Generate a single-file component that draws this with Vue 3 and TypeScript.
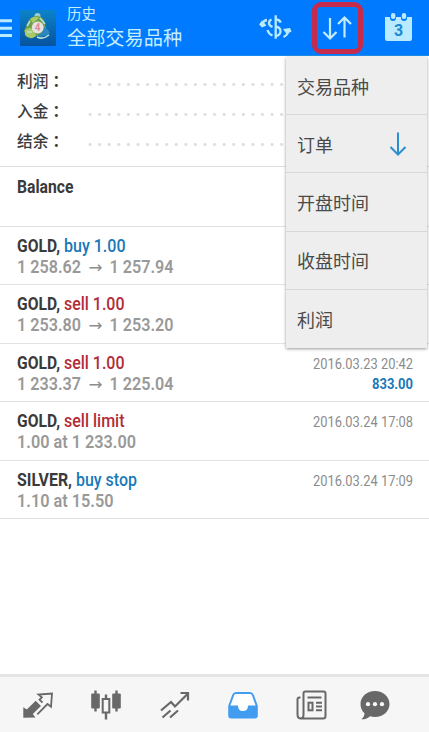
<script setup lang="ts">
interface Piece {
  text: string
  x: number
  width: number
  tone: string
}
interface Order {
  title: Piece[]
  detail: Piece[]
  date?: string
  profit?: string
}

const summary: string[] = ['利润', '入金', '结余']
const menu: string[] = ['交易品种', '订单', '开盘时间', '收盘时间', '利润']

const gold: Piece = { text: 'GOLD,', x: 17, width: 43, tone: 'name' }
const prices = (from: string, to: string): Piece[] => [
  { text: from, x: 17, width: 64, tone: 'muted' },
  { text: '→', x: 88.5, width: 14, tone: 'arrow' },
  { text: to, x: 109.5, width: 64, tone: 'muted' },
]

const orders: Order[] = [
  { title: [gold, { text: 'buy 1.00', x: 64, width: 61.5, tone: 'buy' }], detail: prices('1 258.62', '1 257.94') },
  { title: [gold, { text: 'sell 1.00', x: 64, width: 60.5, tone: 'sell' }], detail: prices('1 253.80', '1 253.20') },
  {
    title: [gold, { text: 'sell 1.00', x: 64, width: 60.5, tone: 'sell' }],
    detail: prices('1 233.37', '1 225.04'),
    date: '2016.03.23 20:42',
    profit: '833.00',
  },
  {
    title: [gold, { text: 'sell limit', x: 64, width: 60.5, tone: 'sell' }],
    detail: [{ text: '1.00 at 1 233.00', x: 17, width: 119, tone: 'muted' }],
    date: '2016.03.24 17:08',
  },
  {
    title: [
      { text: 'SILVER,', x: 17, width: 55, tone: 'name' },
      { text: 'buy stop', x: 76, width: 61, tone: 'buy' },
    ],
    detail: [{ text: '1.10 at 15.50', x: 17, width: 96.5, tone: 'muted' }],
    date: '2016.03.24 17:09',
  },
]
</script>

<template>
  <div class="screen">
    <header class="bar">
      <svg class="burger" width="13" height="20" viewBox="0 0 13 20">
        <path d="M0 2.8H12M0 10.2H12M0 17.6H12" />
      </svg>
      <svg class="logo" width="36" height="36" viewBox="0 0 36 36">
        <defs>
          <linearGradient id="tile" x1="0" y1="0" x2="0" y2="1">
            <stop offset="0" stop-color="#0b83c9" />
            <stop offset="1" stop-color="#07539f" />
          </linearGradient>
        </defs>
        <rect width="36" height="36" rx="1.5" fill="url(#tile)" />
        <circle cx="17.5" cy="6" r="3" fill="#9fcbd0" />
        <path d="M9 10q8-8 15 0l2 8-7 8-12 1-3-6z" fill="#709f4c" />
        <path d="M5 20q5-4 9 0l2 6q-6 5-11-1zM10 9q5-4 9-1l-6 5z" fill="#a9c968" />
        <path d="M24 17q7 3 5 8l-9 2-3-2q6-1 7-8z" fill="#2a86bd" />
        <path d="M17 27q6 3 12-2M20 8l5 6M7 16l3-5M7 22h5" fill="none" stroke="#b9ded4" stroke-width="1.6" />
        <circle cx="17.7" cy="17.5" r="5.9" fill="#e6e2e4" />
        <text x="17.7" y="21.2" text-anchor="middle" class="four">4</text>
      </svg>
      <div class="heading">
        <span class="small">历史</span>
        <span class="large">全部交易品种</span>
      </div>
      <svg class="currency" width="33" height="28" viewBox="0 0 33 28">
        <g fill="none" stroke="#b9eaff" stroke-width="2.3">
          <path d="M3 12Q4 7.5 8 7M29.5 17Q29 22 24.5 24" />
          <path d="M12.5 6.500q-2.500 1-2.500 3.700 0 2.500 3.500 3.700M8.500 17q1 4 5 5.500" />
          <path d="M16.700 2.300v23.400M16.700 6.500q4 0 5 3.200M16.700 13.500q4.800 1 4.800 4.700t-4.800 5" />
        </g>
        <path d="M0 11.500l3-4 4.500 5-4.500 2zM32.500 18.500l-1.500-3.500-7 1 3.500 5z" fill="#b9eaff" />
      </svg>
      <div class="sort">
        <svg width="30" height="26" viewBox="0 0 30 26">
          <path d="M8 3V23.500M1.500 17L8 23.500L14.500 17M22.500 22.500V2.500M16 9L22.500 2.500L29 9" />
        </svg>
      </div>
      <svg class="calendar" width="29" height="30" viewBox="0 0 29 30">
        <path d="M1 5h5v1q0 3 3 3t3-3V5h5v1q0 3 3 3t3-3V5h5v22q0 2-2 2H3q-2 0-2-2z" fill="#b9eaff" />
        <rect x="7" y="1" width="4.4" height="6" rx="2" fill="#b9eaff" />
        <rect x="17.8" y="1" width="4.4" height="6" rx="2" fill="#b9eaff" />
        <text x="14.5" y="24" text-anchor="middle" class="day">3</text>
      </svg>
    </header>

    <main class="content">
      <section class="summary">
        <div v-for="label in summary" :key="label" class="line">
          <span class="label">{{ label }}<span class="colon">：</span></span>
          <i class="dots"></i>
        </div>
      </section>
      <section class="balance">
        <svg width="429" height="58"><text x="17" y="26" textLength="56.5" lengthAdjust="spacingAndGlyphs" class="name">Balance</text></svg>
      </section>
      <section v-for="(order, index) in orders" :key="index" class="order">
        <svg width="429" height="57">
          <text v-for="p in order.title" :key="p.text" :x="p.x" y="24.9" :textLength="p.width" lengthAdjust="spacingAndGlyphs" :class="p.tone">{{ p.text }}</text>
          <text v-for="p in order.detail" :key="p.text" :x="p.x" y="45.6" :textLength="p.width" lengthAdjust="spacingAndGlyphs" :class="p.tone">{{ p.text }}</text>
          <text v-if="order.date" x="313" y="24.5" textLength="100" lengthAdjust="spacingAndGlyphs" class="date">{{ order.date }}</text>
          <text v-if="order.profit" x="372" y="45.4" textLength="41" lengthAdjust="spacingAndGlyphs" class="profit">{{ order.profit }}</text>
        </svg>
      </section>
    </main>

    <nav class="tabs">
      <svg width="32" height="32" viewBox="0 0 32 32">
        <path d="M1.3 28.7V18.2L4.8 20.5L13.7 11.7L19 17L10.8 25L13.5 28.4Z" fill="#686868" />
        <path d="M20.5 13.5L17.5 10.8L19.8 8.3L16.500 5.500L30 4.500L29 17.700L25.500 15L15.300 25.300" fill="none" stroke="#686868" stroke-width="1.800" />
      </svg>
      <svg width="32" height="32" viewBox="0 0 32 32">
        <path d="M5.5 1.500v21M26.500 1.500v21M16 5.500v25" stroke="#686868" stroke-width="2.400" />
        <rect x="1.200" y="4.500" width="8.600" height="15" rx="1" fill="#686868" />
        <rect x="22.200" y="4.500" width="8.600" height="15" rx="1" fill="#686868" />
        <rect x="12.700" y="10" width="6.600" height="13.500" fill="#f6f6f6" stroke="#686868" stroke-width="2" />
      </svg>
      <svg class="trend" width="32" height="32" viewBox="0 0 32 32">
        <path d="M2 21.500l10-8.500 4 4.500L28.500 5M21.500 4h7.500v7.500M3.500 28.500l8-7M11 28.500l8-7" fill="none" stroke="#686868" stroke-width="2.200" />
      </svg>
      <svg width="32" height="32" viewBox="0 0 32 32">
        <path d="M2.200 17L6.200 6Q7 4 9 4H23Q25 4 25.800 6L29.800 17V26.500Q29.800 28.500 27.800 28.500H4.200Q2.200 28.500 2.200 26.500Z" fill="#fff" stroke="#429cf0" stroke-width="2" />
        <path d="M2 16.500h9q0 5.500 5 5.500t5-5.500h9v10q0 2-2 2H4q-2 0-2-2z" fill="#429cf0" />
      </svg>
      <svg width="32" height="32" viewBox="0 0 32 32">
        <g fill="none" stroke="#686868" stroke-width="2">
          <path d="M5.500 8.500H4.500q-2 0-2 2v15q0 4 3.500 4H28q2.500 0 2.500-2.500V4.500q0-2-2-2H10.500q-2 0-2 2v21q0 4-3 4" />
          <path d="M12.500 8.500h14M21 13.700h6M21 17.500h6M21 21.300h6" />
          <rect x="13.500" y="13.700" width="4" height="7.600" />
        </g>
      </svg>
      <svg class="chat" width="32" height="32" viewBox="0 0 32 32">
        <path d="M16 2C7.800 2 1.500 7.800 1.500 15c0 4 1.500 7 4 9.300 0 2.700-1.300 4.500-3.200 6 3.800.2 6.700-1.200 8.700-3.100 1.600.5 3.300.8 5 .8 8.200 0 14.500-5.800 14.500-13S24.200 2 16 2z" fill="#686868" />
        <g fill="#f8f8f8">
          <circle cx="9" cy="15.200" r="2.100" /><circle cx="16" cy="15.200" r="2.100" /><circle cx="23" cy="15.200" r="2.100" />
        </g>
      </svg>
    </nav>

    <div class="menu">
      <div v-for="(item, index) in menu" :key="item" class="item">
        <span>{{ item }}</span>
        <svg v-if="index === 1" width="18" height="26" viewBox="0 0 18 26">
          <path d="M9 1.500v22M1.500 16L9 23.500l7.500-7.500" />
        </svg>
      </div>
    </div>
  </div>
</template>

<style>
body {
  margin: 0;
}
</style>

<style scoped>
.screen {
  position: relative;
  display: flex;
  flex-direction: column;
  width: 429px;
  height: 732px;
  overflow: hidden;
  background: #fff;
  font-family: Roboto, "Noto Sans CJK SC", sans-serif;
}
svg {
  display: block;
  flex: none;
}
.bar {
  display: flex;
  align-items: flex-start;
  box-sizing: border-box;
  height: 56px;
  flex: none;
  background: #007bff;
  border-bottom: 1px solid #168bea;
}
.burger {
  margin-top: 18px;
}
.burger path {
  stroke: #b9eaff;
  stroke-width: 3;
}
.logo {
  margin: 10px 0 0 7px;
}
.four {
  font: bold 10px Roboto, sans-serif;
  fill: #dc8d91;
}
.heading {
  display: flex;
  flex-direction: column;
  width: 192px;
  margin: 6px 0 0 11px;
  color: #c5eeff;
}
.small {
  font-size: 14.5px;
  line-height: 18px;
}
.large {
  font-size: 19.2px;
  line-height: 30px;
}
.currency {
  margin: 13px 0 0 0;
}
.sort {
  display: flex;
  align-items: center;
  justify-content: center;
  box-sizing: border-box;
  width: 51px;
  height: 52px;
  margin: 2px 0 0 20px;
  border: 5px solid #c52b4c;
  border-radius: 9px;
}
.sort svg {
  margin-left: -2px;
}
.sort path {
  fill: none;
  stroke: #c1edff;
  stroke-width: 2.2;
}
.calendar {
  margin: 12px 0 0 21px;
}
.day {
  font: bold 16px Roboto, sans-serif;
  fill: #168bd4;
}
.content {
  display: flex;
  flex: 1;
  flex-direction: column;
}
.summary {
  display: flex;
  flex-direction: column;
  box-sizing: border-box;
  height: 111px;
  padding: 10px 17px 0;
  border-bottom: 1px solid #ddd;
}
.line {
  display: flex;
  height: 30px;
  line-height: 30px;
  font-size: 15.7px;
  font-weight: 500;
  color: #3c3c3c;
}
.label {
  width: 68px;
}
.colon {
  font-family: "Noto Sans CJK TC", sans-serif;
  font-weight: 700;
}
.dots {
  flex: 1;
  height: 3px;
  margin-top: 17px;
  background: radial-gradient(circle at 5px 1.5px, #dcdcdc 1.1px, transparent 1.8px) 0 0 / 9.58px 3px repeat-x;
}
.balance {
  box-sizing: border-box;
  height: 59.5px;
  border-bottom: 1px solid #e2e2e2;
}
.order {
  box-sizing: border-box;
  height: 58.5px;
  border-bottom: 1px solid #e2e2e2;
}
.name,
.buy,
.sell {
  font-size: 18.5px;
}
.name {
  font-weight: 700;
  fill: #3a3a3a;
}
.buy {
  font-weight: 500;
  fill: #1979b8;
}
.sell {
  font-weight: 500;
  fill: #b12c36;
}
.muted {
  font-size: 18px;
  font-weight: 600;
  fill: #999;
}
.arrow {
  font-family: "DejaVu Sans", sans-serif;
  font-size: 16px;
  fill: #8c8c8c;
}
.date {
  font-size: 15px;
  fill: #8c8c8c;
}
.profit {
  font-size: 15px;
  font-weight: 700;
  fill: #1979b8;
}
.tabs {
  display: flex;
  align-items: flex-start;
  gap: 36px;
  box-sizing: border-box;
  height: 58px;
  padding: 12px 0 0 22px;
  background: #f6f6f6;
  border-top: 3px solid #e4e4e4;
}
.trend {
  margin-left: 1px;
}
.chat {
  margin-left: -4px;
}
.menu {
  position: absolute;
  top: 57px;
  left: 286px;
  width: 141px;
  height: 291px;
  background: #eee;
  box-shadow: 0 1px 3px #999;
}
.item {
  display: flex;
  align-items: center;
  justify-content: space-between;
  box-sizing: border-box;
  height: 58.2px;
  padding: 0 20px 0 11px;
  border-bottom: 1px solid #d8d8d8;
  font-size: 18px;
  color: #4a4a4a;
}
.item:last-child {
  border-bottom: 0;
}
.item path {
  fill: none;
  stroke: #2b8ece;
  stroke-width: 2;
}
</style>
